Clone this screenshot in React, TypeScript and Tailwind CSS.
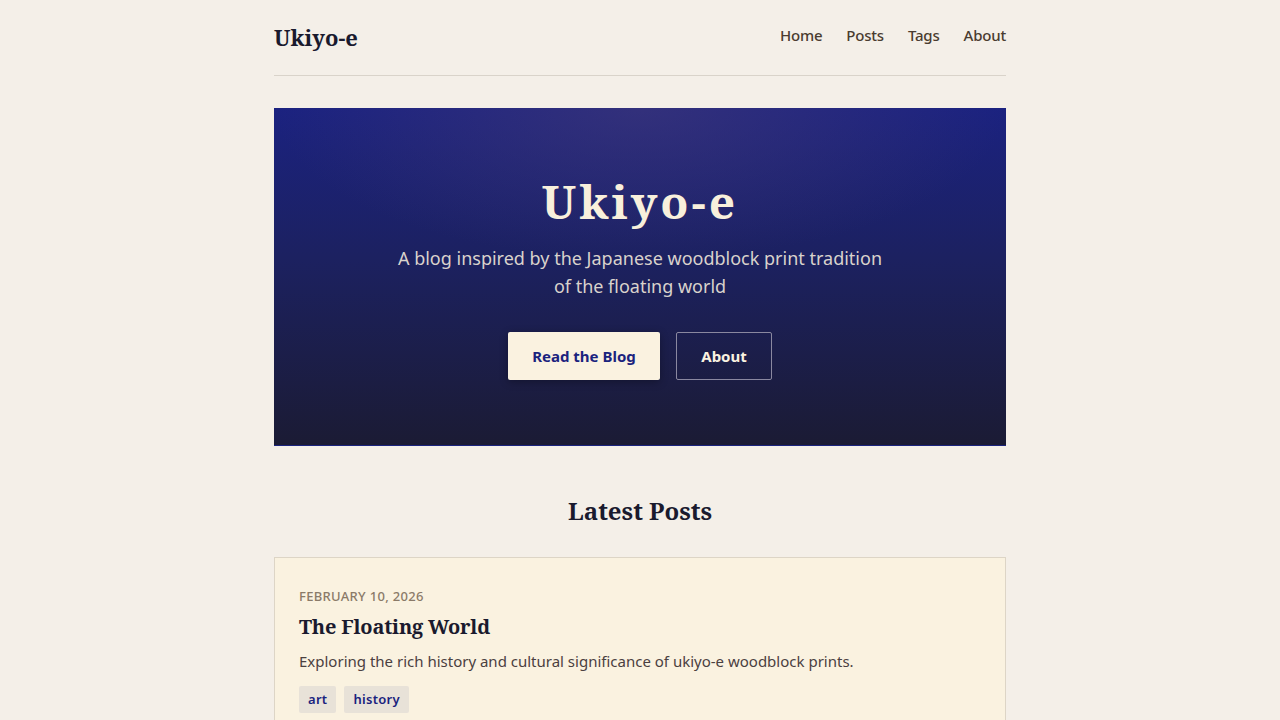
import React from "react";

const serif = { fontFamily: '"Noto Serif", "DejaVu Serif", "Liberation Serif", serif' };

export default function App() {
  return (
    <div className="min-h-screen bg-[#f4efe8] text-[#1a1a2e]" style={{ fontFamily: '"Noto Sans", "Open Sans", sans-serif' }}>
      <div className="mx-auto w-[732px]">
        <header className="flex h-[76px] items-center justify-between border-b border-[#d9d3ca] pb-[2px]">
          <div className="text-[22px] font-bold leading-none text-[#1a1a2e]" style={serif}>Ukiyo-e</div>
          <nav className="flex gap-6 text-[15px] font-medium tracking-[-0.2px] text-[#4a3c30] -mt-[2px]">
            <a>Home</a>
            <a>Posts</a>
            <a>Tags</a>
            <a>About</a>
          </nav>
        </header>

        <section
          className="mt-8 flex h-[338px] flex-col items-center border-b border-[#1a237e]"
          style={{
            background:
              "radial-gradient(ellipse 50% 45% at 50% 0%, rgba(70,60,120,0.55), rgba(70,60,120,0) 100%), linear-gradient(180deg, #1b2280 0%, #1c2160 45%, #1b1b34 100%)",
          }}
        >
          <h1 className="mt-[64px] text-[46px] font-bold leading-[58px] tracking-[3px] text-[#f8f0dc]" style={serif}>Ukiyo-e</h1>
          <p className="mt-[14px] w-[500px] text-center text-[18px] leading-[28px] text-[#d9d2cc]">
            A blog inspired by the Japanese woodblock print tradition of the floating world
          </p>
          <div className="mt-[32px] flex gap-4">
            <button className="h-[48px] w-[152px] rounded-[2px] bg-[#faf2e0] text-[15px] font-bold text-[#1a237e] shadow-[0_2px_8px_rgba(0,0,0,0.3)]">Read the Blog</button>
            <button className="h-[48px] w-[96px] rounded-[2px] border border-[#8a88a0] text-[15px] font-bold text-[#faf2e0]">About</button>
          </div>
        </section>

        <h2 className="mt-[47px] text-center text-[24px] font-bold leading-[36px] text-[#1a1a2e]" style={serif}>Latest Posts</h2>

        <article className="mt-[28px] border border-[#ddd5c6] bg-[#faf2e0] px-6 pt-[28px] pb-6">
          <div className="text-[13px] font-medium uppercase leading-[20px] tracking-[0.3px] text-[#8a7a68]">February 10, 2026</div>
          <h3 className="mt-[7px] text-[20px] font-bold leading-[28px] tracking-[-0.2px] text-[#1a1a2e]" style={serif}>The Floating World</h3>
          <p className="mt-[8px] text-[15px] leading-[24px] text-[#4a4040]">Exploring the rich history and cultural significance of ukiyo-e woodblock prints.</p>
          <div className="mt-[13px] flex gap-2">
            <span className="rounded-[2px] bg-[#e8e2d8] px-[9px] py-[4px] text-[13px] font-semibold leading-[19px] tracking-[0.3px] text-[#1a237e]">art</span>
            <span className="rounded-[2px] bg-[#e8e2d8] px-[9px] py-[4px] text-[13px] font-semibold leading-[19px] tracking-[0.3px] text-[#1a237e]">history</span>
          </div>
        </article>
      </div>
    </div>
  );
}
